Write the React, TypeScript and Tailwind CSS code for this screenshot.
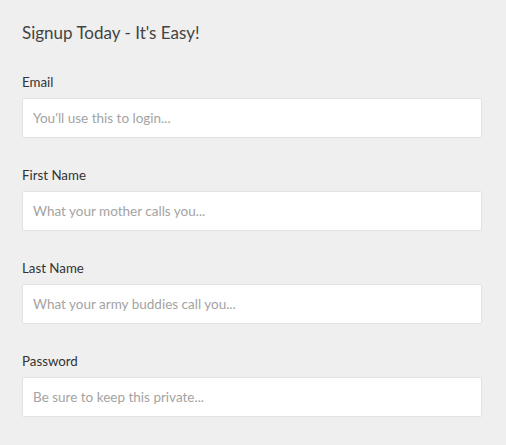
import React from 'react';

const fields = [
  { label: 'Email', placeholder: "You'll use this to login..." },
  { label: 'First Name', placeholder: 'What your mother calls you...' },
  { label: 'Last Name', placeholder: 'What your army buddies call you...' },
  { label: 'Password', placeholder: 'Be sure to keep this private...' },
];

export default function App() {
  return (
    <div className="min-h-[445px] bg-[#efefef] px-[22px] pt-[21px] font-['Lato',sans-serif]">
      <h1 className="text-[17px] leading-[24px] text-[#444]">Signup Today - It's Easy!</h1>
      <form className="mt-[28px] flex w-[460px] flex-col gap-[28px]">
        {fields.map((f) => (
          <div key={f.label} className="flex flex-col gap-[7px]">
            <label className="text-[13.3px] leading-[18px] text-[#333]">{f.label}</label>
            <input
              type={f.label === 'Password' ? 'password' : 'text'}
              placeholder={f.placeholder}
              className="h-[40px] rounded-[2px] border border-[#e2e2e2] bg-white px-[10px] text-[13.5px] text-[#555] placeholder:text-[#a3a3a3] outline-none"
            />
          </div>
        ))}
      </form>
    </div>
  );
}
